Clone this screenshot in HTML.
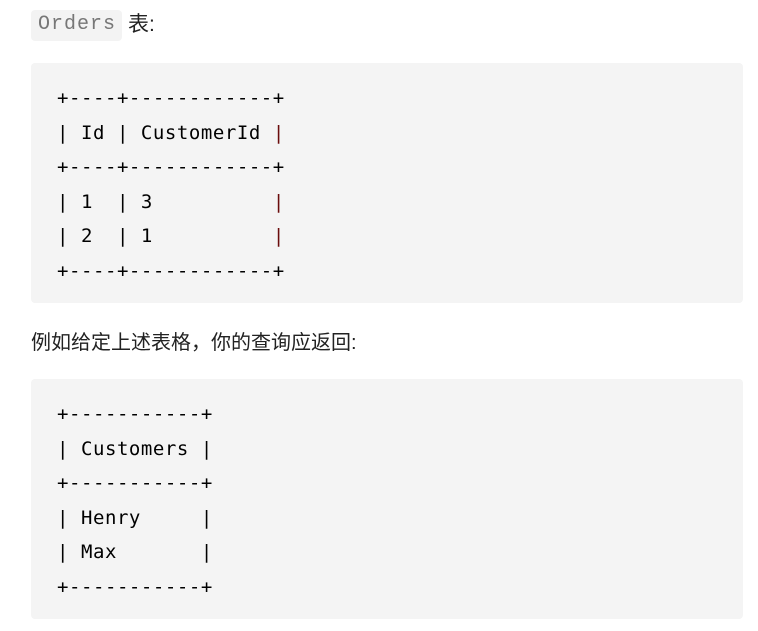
<html><head><style>
body{margin:0;background:#fff;font-family:"Liberation Sans","Noto Sans CJK SC",sans-serif;color:#222;}
.code{position:absolute;left:31px;width:712px;height:240px;background:#f4f4f4;border-radius:4px;}
pre{margin:0;position:absolute;left:26px;top:18px;font-family:"DejaVu Sans Mono","Liberation Mono",monospace;font-size:19px;letter-spacing:0.55px;line-height:34.6px;color:#000;}
.r{color:#6a0c0c}
</style></head><body>
<div style="position:absolute;left:31px;top:10px;width:91px;height:31px;background:#f3f3f3;border-radius:4px;"></div>
<div style="position:absolute;left:38px;top:13px;font-family:'Liberation Mono',monospace;font-size:20px;letter-spacing:1px;color:#777;line-height:24px;">Orders</div>
<div style="position:absolute;left:128px;top:12px;font-size:21px;line-height:26px;">表:</div>
<div class="code" style="top:63px"><pre>+----+------------+
| Id | CustomerId <span class="r">|</span>
+----+------------+
| 1  | 3          <span class="r">|</span>
| 2  | 1          <span class="r">|</span>
+----+------------+</pre></div>
<div style="position:absolute;left:31px;top:330px;font-size:20px;line-height:26px;">例如给定上述表格，你的查询应返回:</div>
<div class="code" style="top:379px"><pre>+-----------+
| Customers |
+-----------+
| Henry     |
| Max       |
+-----------+</pre></div>
</body></html>
